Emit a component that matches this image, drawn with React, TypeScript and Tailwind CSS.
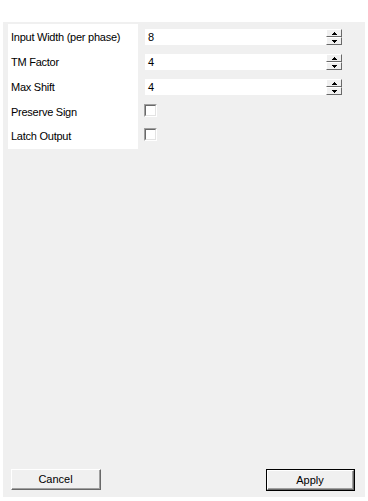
const font = { fontFamily: '"Liberation Sans", Arial, sans-serif' };

function Spinner() {
  return (
    <div className="flex flex-col w-[16px] h-[16px]">
      <div className="h-[8px] bg-[#f0f0f0] border-t border-l border-t-white border-l-white border-b border-r border-b-[#696969] border-r-[#696969] flex items-center justify-center">
        <svg width="5" height="3" viewBox="0 0 5 3">
          <path d="M2 0h1v1h1v1h1v1H0V2h1V1h1z" fill="#000" />
        </svg>
      </div>
      <div className="h-[8px] bg-[#f0f0f0] border-t border-l border-t-white border-l-white border-b border-r border-b-[#696969] border-r-[#696969] flex items-center justify-center">
        <svg width="5" height="3" viewBox="0 0 5 3">
          <path d="M0 0h5v1H4v1H3v1H2V2H1V1H0z" fill="#000" />
        </svg>
      </div>
    </div>
  );
}

function NumberField({ value }: { value: string }) {
  return (
    <div className="flex h-[25px] items-start pt-[4px]">
      <div className="w-[181px] h-[16px] bg-white text-[11px] text-black leading-[16px] pl-[3px]">{value}</div>
      <Spinner />
    </div>
  );
}

function CheckField() {
  return (
    <div className="flex h-[25px] items-start pt-[4px]">
      <div className="w-[13px] h-[13px] -ml-[1px] border-t border-l border-t-[#a0a0a0] border-l-[#a0a0a0] border-b border-r border-b-white border-r-white">
        <div className="w-full h-full bg-white border-t border-l border-t-[#696969] border-l-[#696969] border-b border-r border-b-[#e3e3e3] border-r-[#e3e3e3]" />
      </div>
    </div>
  );
}

function WinButton({ label, isDefault }: { label: string; isDefault?: boolean }) {
  const inner = (
    <div className="w-full h-full border-t border-l border-t-white border-l-white border-b border-r border-b-[#696969] border-r-[#696969]">
      <div className="w-full h-full border-b border-r border-b-[#a0a0a0] border-r-[#a0a0a0] flex items-center justify-center pt-[1px] text-[11px] text-black">
        {label}
      </div>
    </div>
  );
  if (isDefault) {
    return <div className="w-[89px] h-[22px] border border-black bg-[#f0f0f0]">{inner}</div>;
  }
  return <div className="w-[90px] h-[21px] bg-[#f0f0f0]">{inner}</div>;
}

export default function App() {
  const labels = ["Input Width (per phase)", "TM Factor", "Max Shift", "Preserve Sign", "Latch Output"];
  return (
    <div className="w-[368px] h-[501px] bg-white pt-[22px] pl-[3px]" style={font}>
      <div className="w-[362px] h-[475px] bg-[#f0f0f0] flex flex-col">
        <div className="flex pt-[2px] pl-[5px]">
          <div className="w-[130px] h-[125px] bg-white flex flex-col pt-[1px]">
            {labels.map((l) => (
              <div key={l} className="h-[25px] flex items-center pl-[3px] text-[11px] tracking-[-0.25px] text-black whitespace-nowrap">
                {l}
              </div>
            ))}
          </div>
          <div className="flex flex-col pl-[7px] pt-[1px]">
            <NumberField value="8" />
            <NumberField value="4" />
            <NumberField value="4" />
            <CheckField />
            <div className="-mt-[1px]">
              <CheckField />
            </div>
          </div>
        </div>
        <div className="mt-auto flex justify-between items-start pl-[8px] pr-[10px] pb-[6px]">
          <WinButton label="Cancel" />
          <WinButton label="Apply" isDefault />
        </div>
      </div>
    </div>
  );
}
